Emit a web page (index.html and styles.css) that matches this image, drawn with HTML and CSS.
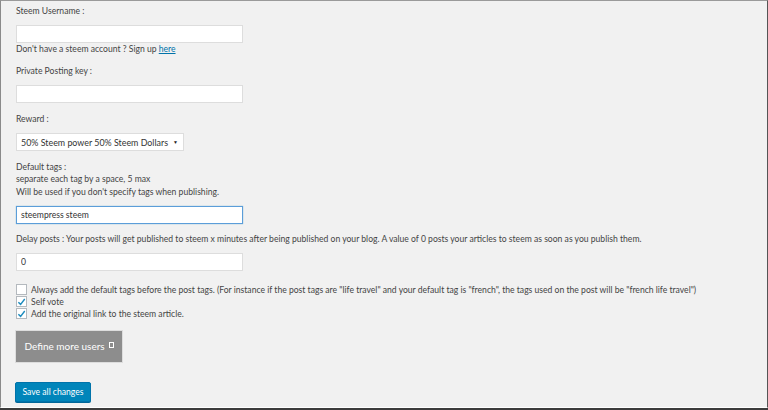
FILE: index.html
```html
<!DOCTYPE html>
<html>
<head>
<meta charset="utf-8">
<link rel="stylesheet" href="styles.css">
</head>
<body>
<div class="frame">
  <form class="form">
    <div class="label first">Steem Username :</div>
    <input class="field" type="text">
    <div class="help">Don't have a steem account ? Sign up <a href="#">here</a></div>
    <div class="label">Private Posting key :</div>
    <input class="field" type="text">
    <div class="label">Reward :</div>
    <div class="select"><span>50% Steem power 50% Steem Dollars</span><span class="arrow">&#9660;</span></div>
    <div class="label tight">Default tags :<br>separate each tag by a space, 5 max<br>Will be used if you don't specify tags when publishing.</div>
    <input class="field focus" type="text" value="steempress steem">
    <div class="label delay">Delay posts : Your posts will get published to steem x minutes after being published on your blog. A value of 0 posts your articles to steem as soon as you publish them.</div>
    <input class="field" type="text" value="0">
    <div class="checks">
      <label class="check"><span class="box"></span>Always add the default tags before the post tags. (For instance if the post tags are "life travel" and your default tag is "french", the tags used on the post will be "french life travel")</label>
      <label class="check"><span class="box"><svg viewBox="0 0 10 10" width="10" height="10"><path d="M1.5 5.2 L4 7.6 L8.6 1.6" fill="none" stroke="#1e8cbe" stroke-width="1.6"/></svg></span>Self vote</label>
      <label class="check"><span class="box"><svg viewBox="0 0 10 10" width="10" height="10"><path d="M1.5 5.2 L4 7.6 L8.6 1.6" fill="none" stroke="#1e8cbe" stroke-width="1.6"/></svg></span>Add the original link to the steem article.</label>
    </div>
    <div class="more">Define more users <span class="sq"></span></div>
    <div class="save">Save all changes</div>
  </form>
</div>
</body>
</html>
```
FILE: styles.css
```css
html, body {
  margin: 0;
  padding: 0;
  background: #f1f1f1;
}
body {
  width: 768px;
  height: 410px;
  overflow: hidden;
  font-family: "Lato", "Noto Sans", sans-serif;
  font-size: 8.6px;
  color: #444;
}
.frame {
  box-sizing: border-box;
  width: 768px;
  height: 408px;
  border-left: 1px solid #8a8a8a;
  border-top: 1px solid #9a9a9a;
  border-right: 1px solid #555;
  border-bottom: 1px solid #fff;
  box-shadow: 0 2px 0 #3c3c3c;
  background: #f1f1f1;
}
.form {
  display: flex;
  flex-direction: column;
  align-items: flex-start;
  padding: 4px 0 0 15px;
  white-space: nowrap;
}
.label {
  line-height: 12px;
  margin-top: 10px;
}
.label.first { margin-top: 0; }
.label.tight { line-height: 12.3px; margin-top: 10px; }
.label.delay { margin-top: 9px; }
.field {
  box-sizing: border-box;
  width: 227px;
  height: 18px;
  margin: 8px 0 0 0;
  padding: 0 4px;
  border: 1px solid #ddd;
  background: #fff;
  font-family: inherit;
  font-size: 8.6px;
  color: #333;
  outline: none;
}
.field.focus {
  border-color: #5b9dd9;
  box-shadow: 0 0 1px rgba(30,140,190,.6);
}
.help { line-height: 12px; margin-top: 0; }
.help a { color: #0073aa; text-decoration: underline; }
.select {
  box-sizing: border-box;
  margin-top: 8px;
  height: 18px;
  width: 168px;
  display: flex;
  align-items: center;
  justify-content: space-between;
  padding: 0 5px 0 4px;
  border: 1px solid #ddd;
  background: #fff;
  color: #333;
  font-size: 8.9px;
}
.arrow { font-size: 5px; color: #222; }
.checks {
  margin-top: 13px;
  display: flex;
  flex-direction: column;
}
.check {
  display: flex;
  align-items: center;
  height: 12px;
  line-height: 12px;
  flex: none;
}
.box {
  box-sizing: border-box;
  width: 11px;
  height: 11px;
  border: 1px solid #b4b9be;
  background: #fff;
  margin-right: 4px;
  display: flex;
  align-items: center;
  justify-content: center;
}
.more {
  box-sizing: border-box;
  margin-top: 10px;
  margin-left: -1px;
  width: 108px;
  height: 33px;
  flex: none;
  background: #8d8d8d;
  border: 1px solid #ddd;
  color: #fff;
  font-size: 10px;
  display: flex;
  align-items: center;
  justify-content: center;
  gap: 4px;
}
.sq {
  display: inline-block;
  width: 3px;
  height: 4px;
  border: 1px solid #fff;
  margin-top: -3px;
}
.save {
  box-sizing: border-box;
  margin-top: 19px;
  margin-left: -1px;
  width: 76px;
  height: 20px;
  flex: none;
  background: #0085ba;
  border: 1px solid #0073aa;
  border-radius: 2px;
  color: #fff;
  font-size: 8.6px;
  display: flex;
  align-items: center;
  justify-content: center;
  box-shadow: 0 1px 0 #006799;
}
```
